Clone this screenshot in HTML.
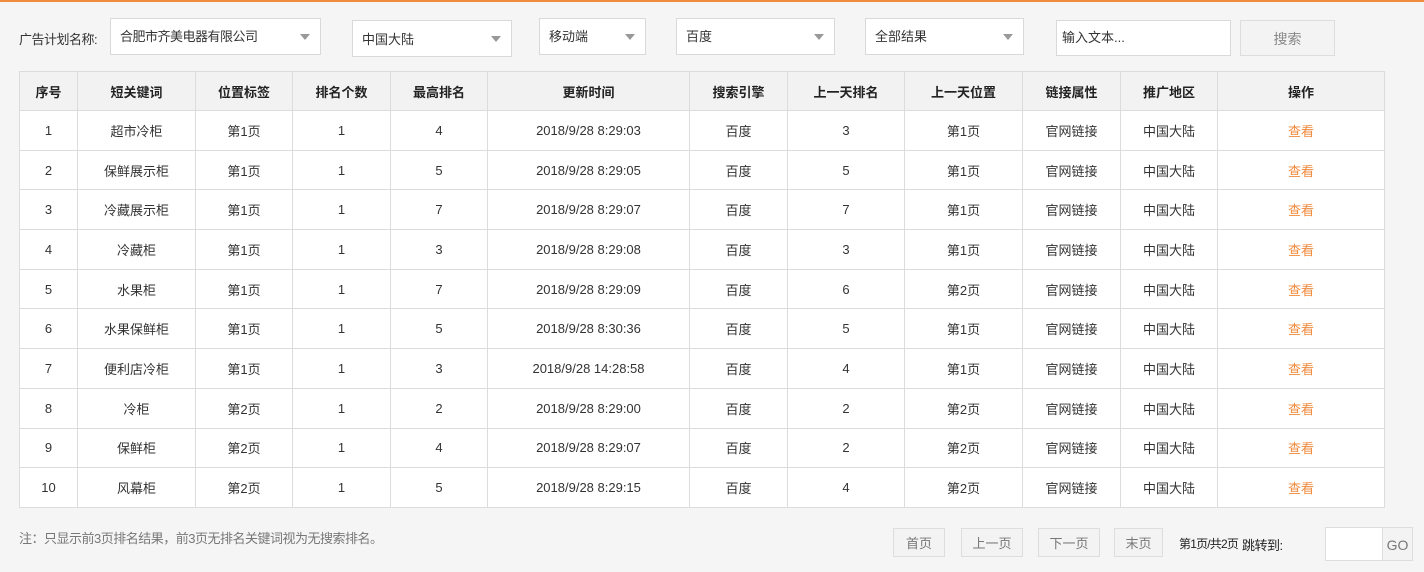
<!DOCTYPE html>
<html><head><meta charset="utf-8"><style>
*{box-sizing:border-box;margin:0;padding:0}
body{width:1424px;height:572px;background:#f5f5f5;font-family:"Liberation Sans","Noto Sans CJK SC",sans-serif;font-size:13px;color:#333;position:relative;overflow:hidden}
.top{position:absolute;left:0;top:0;width:1424px;height:2px;background:#f08a3c}
.a{position:absolute;white-space:nowrap}
.sel{position:absolute;background:#fff;border:1px solid #d9d9d9;padding-left:9px;line-height:34px;color:#333}
.sel:after{content:"";position:absolute;right:10px;top:15px;border-left:5px solid transparent;border-right:5px solid transparent;border-top:6px solid #999}
table{position:absolute;left:19px;top:71px;border-collapse:collapse;background:#fff;table-layout:fixed}
td,th{border:1px solid #dcdcdc;text-align:center;height:39.7px;font-size:13px;font-weight:normal;color:#333;padding:0}
th{background:#f2f2f2;font-weight:bold;color:#222;height:39px}
.o{color:#f08a3c}
.btn{position:absolute;border:1px solid #ddd;background:#f3f3f3;color:#777;text-align:center;font-size:13px}
</style></head><body>
<div class="top"></div>
<div class="a" style="left:19px;top:29px;letter-spacing:-0.5px">广告计划名称:</div>
<div class="sel" style="left:110px;top:18px;width:211px;height:37px;line-height:36px;letter-spacing:-0.5px">合肥市齐美电器有限公司</div>
<div class="sel" style="left:352px;top:20px;width:160px;height:37px;line-height:38px">中国大陆</div>
<div class="sel" style="left:539px;top:18px;width:107px;height:37px;line-height:36px">移动端</div>
<div class="sel" style="left:676px;top:18px;width:159px;height:37px;line-height:36px">百度</div>
<div class="sel" style="left:865px;top:18px;width:159px;height:37px;line-height:36px">全部结果</div>
<div class="a" style="left:1056px;top:20px;width:175px;height:36px;background:#fff;border:1px solid #d9d9d9;padding-left:5px;line-height:34px">输入文本...</div>
<div class="btn" style="left:1240px;top:20px;width:95px;height:36px;line-height:36px;font-size:14px;color:#888">搜索</div>
<table>
<colgroup><col style="width:58px"><col style="width:118px"><col style="width:97px"><col style="width:98px"><col style="width:97px"><col style="width:202px"><col style="width:98px"><col style="width:117px"><col style="width:118px"><col style="width:98px"><col style="width:97px"><col style="width:167px"></colgroup>
<tr><th>序号</th><th>短关键词</th><th>位置标签</th><th>排名个数</th><th>最高排名</th><th>更新时间</th><th>搜索引擎</th><th>上一天排名</th><th>上一天位置</th><th>链接属性</th><th>推广地区</th><th>操作</th></tr>
<tr><td>1</td><td>超市冷柜</td><td>第1页</td><td>1</td><td>4</td><td>2018/9/28 8:29:03</td><td>百度</td><td>3</td><td>第1页</td><td>官网链接</td><td>中国大陆</td><td class="o">查看</td></tr>
<tr><td>2</td><td>保鲜展示柜</td><td>第1页</td><td>1</td><td>5</td><td>2018/9/28 8:29:05</td><td>百度</td><td>5</td><td>第1页</td><td>官网链接</td><td>中国大陆</td><td class="o">查看</td></tr>
<tr><td>3</td><td>冷藏展示柜</td><td>第1页</td><td>1</td><td>7</td><td>2018/9/28 8:29:07</td><td>百度</td><td>7</td><td>第1页</td><td>官网链接</td><td>中国大陆</td><td class="o">查看</td></tr>
<tr><td>4</td><td>冷藏柜</td><td>第1页</td><td>1</td><td>3</td><td>2018/9/28 8:29:08</td><td>百度</td><td>3</td><td>第1页</td><td>官网链接</td><td>中国大陆</td><td class="o">查看</td></tr>
<tr><td>5</td><td>水果柜</td><td>第1页</td><td>1</td><td>7</td><td>2018/9/28 8:29:09</td><td>百度</td><td>6</td><td>第2页</td><td>官网链接</td><td>中国大陆</td><td class="o">查看</td></tr>
<tr><td>6</td><td>水果保鲜柜</td><td>第1页</td><td>1</td><td>5</td><td>2018/9/28 8:30:36</td><td>百度</td><td>5</td><td>第1页</td><td>官网链接</td><td>中国大陆</td><td class="o">查看</td></tr>
<tr><td>7</td><td>便利店冷柜</td><td>第1页</td><td>1</td><td>3</td><td>2018/9/28 14:28:58</td><td>百度</td><td>4</td><td>第1页</td><td>官网链接</td><td>中国大陆</td><td class="o">查看</td></tr>
<tr><td>8</td><td>冷柜</td><td>第2页</td><td>1</td><td>2</td><td>2018/9/28 8:29:00</td><td>百度</td><td>2</td><td>第2页</td><td>官网链接</td><td>中国大陆</td><td class="o">查看</td></tr>
<tr><td>9</td><td>保鲜柜</td><td>第2页</td><td>1</td><td>4</td><td>2018/9/28 8:29:07</td><td>百度</td><td>2</td><td>第2页</td><td>官网链接</td><td>中国大陆</td><td class="o">查看</td></tr>
<tr><td>10</td><td>风幕柜</td><td>第2页</td><td>1</td><td>5</td><td>2018/9/28 8:29:15</td><td>百度</td><td>4</td><td>第2页</td><td>官网链接</td><td>中国大陆</td><td class="o">查看</td></tr>
</table>
<div class="a" style="left:19px;top:528px;color:#777;letter-spacing:-0.5px">注：只显示前3页排名结果，前3页无排名关键词视为无搜索排名。</div>
<div class="btn" style="left:893px;top:528px;width:52px;height:29px;line-height:29px">首页</div>
<div class="btn" style="left:961px;top:528px;width:62px;height:29px;line-height:29px">上一页</div>
<div class="btn" style="left:1038px;top:528px;width:62px;height:29px;line-height:29px">下一页</div>
<div class="btn" style="left:1114px;top:528px;width:49px;height:29px;line-height:29px">末页</div>
<div class="a" style="left:1179px;top:535px;color:#222;font-size:12px;letter-spacing:-0.8px">第1页/共2页</div>
<div class="a" style="left:1242px;top:535px;color:#222;font-size:13px;letter-spacing:-0.5px">跳转到:</div>
<div class="a" style="left:1325px;top:527px;width:58px;height:34px;background:#fff;border:1px solid #ddd"></div>
<div class="btn" style="left:1382px;top:527px;width:31px;height:34px;line-height:34px;font-size:14px">GO</div>
</body></html>
